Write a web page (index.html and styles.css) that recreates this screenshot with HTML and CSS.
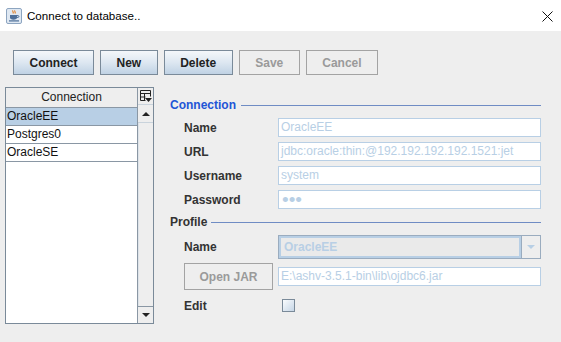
FILE: index.html
```html
<!DOCTYPE html>
<html lang="en">
<head>
  <meta charset="UTF-8">
  <title>Connect to database..</title>
  <link rel="stylesheet" href="styles.css">
</head>
<body>
  <div class="window">
    <div class="titlebar">
      <svg class="app-icon" width="16" height="16" viewBox="0 0 16 16">
        <rect x="0.5" y="0.5" width="15" height="15" rx="1.5" fill="#dfe8f2" stroke="#8da5c0"/>
        <path d="M7 2.5c-1 1 1 1.5 0 3M9 2.5c-1 1 1 1.5 0 3" stroke="#e07a1a" stroke-width="1.1" fill="none"/>
        <path d="M4 7h7v2.5c0 1.4-1.2 2.2-3.5 2.2S4 10.9 4 9.5z" fill="#4d6f99"/>
        <path d="M11 7.6h1.2c.9 0 .9 1.8 0 1.8H11" stroke="#4d6f99" fill="none"/>
        <rect x="3" y="12.3" width="10" height="1.2" fill="#4d6f99"/>
      </svg>
      <span class="title-text">Connect to database..</span>
      <svg class="close" width="11" height="11" viewBox="0 0 11 11">
        <path d="M0.5 0.5l10 10M10.5 0.5l-10 10" stroke="#111" stroke-width="1"/>
      </svg>
    </div>

    <div class="content">
      <div class="toolbar">
        <button class="btn">Connect</button>
        <button class="btn">New</button>
        <button class="btn">Delete</button>
        <button class="btn" disabled>Save</button>
        <button class="btn" disabled>Cancel</button>
      </div>

      <div class="main">
        <div class="conn-table">
          <div class="table-body">
            <div class="th">Connection</div>
            <div class="tr selected">OracleEE</div>
            <div class="tr">Postgres0</div>
            <div class="tr">OracleSE</div>
          </div>
          <div class="scroll-col">
            <div class="col-control">
              <svg width="12" height="13" viewBox="0 0 12 13">
                <path d="M0.5 0.5h10v6M0.5 0.5v10h5M0.5 3.5h10M4.5 3.5v7M0.5 7h5" stroke="#222" fill="none"/>
                <path d="M5 8h7l-3.5 4z" fill="#222"/>
              </svg>
            </div>
            <div class="arrow-btn"><span class="tri up"></span></div>
            <div class="track"></div>
            <div class="arrow-btn down-btn"><span class="tri down"></span></div>
          </div>
        </div>

        <div class="form">
          <div class="group-title blue">Connection</div>
          <div class="fields">
            <label>Name</label>
            <div class="field">OracleEE</div>
            <label>URL</label>
            <div class="field">jdbc:oracle:thin:@192.192.192.192.1521:jet</div>
            <label>Username</label>
            <div class="field">system</div>
            <label>Password</label>
            <div class="field dots">&bull;&bull;&bull;</div>
          </div>

          <div class="group-title profile">Profile</div>
          <div class="fields profile-fields">
            <label>Name</label>
            <div class="combo">
              <span class="combo-text">OracleEE</span>
              <span class="combo-arrow"><span class="tri light"></span></span>
            </div>
            <button class="btn" disabled>Open JAR</button>
            <div class="field">E:\ashv-3.5.1-bin\lib\ojdbc6.jar</div>
            <label class="edit-label">Edit</label>
            <div class="edit-box"><span class="checkbox"></span></div>
          </div>
        </div>
      </div>
    </div>
  </div>
</body>
</html>
```

FILE: styles.css
```css
body {
  margin: 0;
  padding: 0;
  font-family: "Liberation Sans", Arial, sans-serif;
  font-size: 12px;
  color: #333;
  background-color: #eeeeee;
}

.window {
  width: 561px;
  height: 342px;
  overflow: hidden;
}

.titlebar {
  display: flex;
  align-items: center;
  height: 31px;
  padding-left: 6px;
  background-color: #fff;
}

.app-icon {
  margin-right: 5px;
  margin-top: 1px;
}

.title-text {
  font-size: 11.6px;
  color: #000;
}

.close {
  margin-left: auto;
  margin-right: 8px;
  margin-top: 1px;
}

.content {
  height: 311px;
  background-color: #eeeeee;
}

.toolbar {
  display: flex;
  gap: 6px;
  padding: 19px 0 0 13px;
}

.btn {
  height: 25px;
  padding: 0 15.5px;
  border: 1px solid #7a8a99;
  background: linear-gradient(#f4f7fa, #dde7f1 50%, #c0d2e4);
  font-family: "Liberation Sans", Arial, sans-serif;
  font-size: 12px;
  font-weight: bold;
  color: #222;
}

.btn:disabled {
  border-color: #a3a3a3;
  background: #eeeeee;
  color: #9a9a9a;
}

.main {
  display: flex;
  align-items: flex-start;
  margin-top: 12px;
  padding-left: 5px;
}

/* connection list */
.conn-table {
  display: flex;
  width: 147px;
  height: 235px;
  border: 1px solid #7a8a99;
  background-color: #fff;
}

.table-body {
  width: 131px;
}

.th {
  height: 19px;
  line-height: 19px;
  text-align: center;
  background-color: #eeeeee;
  border-bottom: 1px solid #8a97a4;
  color: #222;
}

.tr {
  height: 17px;
  line-height: 17px;
  padding-left: 1px;
  border-bottom: 1px solid #8a97a4;
  color: #111;
}

.tr.selected {
  background-color: #b8cfe5;
}

.scroll-col {
  display: flex;
  flex-direction: column;
  width: 15px;
  border-left: 1px solid #8a97a4;
  background-color: #eeeeee;
}

.col-control {
  display: flex;
  align-items: center;
  justify-content: center;
  height: 16px;
  border-bottom: 1px solid #c9d3dc;
}

.arrow-btn {
  display: flex;
  align-items: center;
  justify-content: center;
  height: 17px;
  border-bottom: 1px solid #c9d3dc;
  background-color: #eeeeee;
}

.down-btn {
  border-bottom: none;
  border-top: 1px solid #8a97a4;
  height: 16px;
}

.track {
  flex: 1;
  border-left: 1px solid #dde3e9;
}

.tri {
  width: 0;
  height: 0;
  border-left: 4px solid transparent;
  border-right: 4px solid transparent;
}

.tri.up {
  border-bottom: 4px solid #222;
}

.tri.down,
.tri.light {
  border-top: 4px solid #222;
}

.tri.light {
  border-top-color: #b8cfe5;
}

/* form */
.form {
  width: 371px;
  margin-left: 16px;
  padding-top: 11px;
}

.group-title {
  display: flex;
  align-items: center;
  gap: 5px;
  height: 14px;
  font-weight: bold;
}

.group-title::after {
  content: "";
  flex: 1;
  border-top: 1px solid #6f8cc4;
}

.group-title.blue {
  color: #2255d6;
}

.group-title.profile {
  margin-top: 6px;
  gap: 4px;
}

.fields {
  display: grid;
  grid-template-columns: 94px 263px;
  row-gap: 5px;
  align-items: center;
  padding-left: 14px;
  margin-top: 6px;
}

.fields label {
  font-weight: bold;
  color: #333;
}

.field {
  height: 17px;
  line-height: 17px;
  padding-left: 2px;
  border: 1px solid #b8cfe5;
  background-color: #fff;
  color: #b8cfe5;
  white-space: nowrap;
  overflow: hidden;
}

.field.dots {
  font-size: 19px;
  letter-spacing: 0;
  padding-left: 3px;
}

.profile-fields {
  row-gap: 4px;
}

.profile-fields .btn {
  width: 89px;
  height: 27px;
  padding: 0;
}

.combo {
  display: flex;
  height: 22px;
  border: 1px solid #9aacbf;
}

.combo-text {
  flex: 1;
  line-height: 22px;
  padding-left: 5px;
  font-weight: bold;
  color: #b8cfe5;
  background-color: #eaeaea;
  box-shadow: inset 0 0 0 2px #b8cfe5;
}

.combo-arrow {
  display: flex;
  align-items: center;
  justify-content: center;
  width: 18px;
  border-left: 1px solid #9aacbf;
  background-color: #eeeeee;
}

.edit-label {
  margin-top: 5px;
}

.edit-box {
  margin-top: 5px;
  height: 14px;
}

.checkbox {
  display: block;
  width: 11px;
  height: 11px;
  margin-left: 4px;
  border: 1px solid #7a8a99;
  background: linear-gradient(135deg, #fafcfe, #c6d6e6);
}
```
